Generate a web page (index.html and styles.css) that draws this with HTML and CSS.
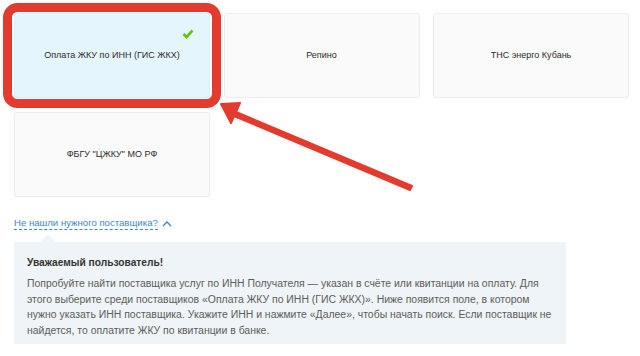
FILE: index.html
```html
<!DOCTYPE html>
<html lang="ru">
<head>
<meta charset="utf-8">
<link rel="stylesheet" href="styles.css">
</head>
<body>
<div class="page">
  <div class="grid">
    <div class="card selected">
      <span>Оплата ЖКУ по ИНН (ГИС ЖКХ)</span>
      <svg class="check" width="12" height="10" viewBox="0 0 12 10"><path d="M1.5 5 L4.5 8 L10.5 1.5" fill="none" stroke="#66c20a" stroke-width="2.6"/></svg>
    </div>
    <div class="card"><span>Репино</span></div>
    <div class="card"><span>ТНС энерго Кубань</span></div>
    <div class="card"><span>ФБГУ "ЦЖКУ" МО РФ</span></div>
  </div>
  <div class="toggle">
    <span class="link">Не нашли нужного поставщика?</span>
    <svg class="chev" width="10" height="7" viewBox="0 0 10 7"><path d="M1 6 L5 2 L9 6" fill="none" stroke="#3d86c6" stroke-width="1.3"/></svg>
  </div>
  <div class="info">
    <div class="info-title">Уважаемый пользователь!</div>
    <p class="info-text">Попробуйте найти поставщика услуг по ИНН Получателя — указан в счёте или квитанции на оплату. Для этого выберите среди поставщиков «Оплата ЖКУ по ИНН (ГИС ЖКХ)». Ниже появится поле, в котором нужно указать ИНН поставщика. Укажите ИНН и нажмите «Далее», чтобы начать поиск. Если поставщик не найдется, то оплатите ЖКУ по квитанции в банке.</p>
  </div>
</div>
<svg class="annot" width="640" height="356" viewBox="0 0 640 356">
  <rect x="7.5" y="7.5" width="209" height="96" rx="10" ry="10" fill="none" stroke="#e33b2e" stroke-width="9"/>
  <path d="M412 186 L236 112 L240 103 L221 104 L231 123 L234 116 L410 190 Z" fill="#e33b2e" stroke="#e33b2e" stroke-width="2" stroke-linejoin="round"/>
</svg>
</body>
</html>
```
FILE: styles.css
```css
html, body {
  margin: 0;
  padding: 0;
  background: #fff;
}
body {
  font-family: "Liberation Sans", Arial, sans-serif;
  color: #333;
  width: 640px;
  height: 356px;
  overflow: hidden;
  position: relative;
}
.page {
  padding: 13px 11px 0 14px;
}
.grid {
  display: grid;
  grid-template-columns: 196px 196px 196px;
  column-gap: 13.5px;
  row-gap: 14px;
}
.card {
  position: relative;
  height: 85px;
  box-sizing: border-box;
  background: #fafafa;
  border: 1px solid #ececec;
  border-radius: 3px;
  display: flex;
  align-items: center;
  justify-content: center;
  font-size: 9px;
  color: #2b2b2b;
  padding-bottom: 2px;
}
.card.selected {
  background: #e5f5fd;
  border-color: #d9eef8;
}
.check {
  position: absolute;
  top: 15px;
  right: 15px;
}
.toggle {
  margin-top: 19px;
  display: flex;
  align-items: center;
  gap: 4px;
  height: 14px;
}
.link {
  font-size: 9.6px;
  color: #3d86c6;
  border-bottom: 1px dashed #3d86c6;
  line-height: 12px;
}
.chev {
  margin-top: 1px;
}
.info {
  position: relative;
  margin-top: 12px;
  width: 552px;
  box-sizing: border-box;
  background: #eef4f7;
  padding: 14px 14px 12px 13px;
  height: 102px;
}
.info::before {
  content: "";
  position: absolute;
  top: -8px;
  left: 26px;
  border-left: 8px solid transparent;
  border-right: 8px solid transparent;
  border-bottom: 8px solid #eef4f7;
}
.info-title {
  font-size: 10.2px;
  font-weight: bold;
  color: #333;
  line-height: 13px;
}
.info-text {
  margin: 7px 0 0;
  font-size: 10.45px;
  line-height: 15.7px;
  color: #5c5c5c;
}
.annot {
  position: absolute;
  left: 0;
  top: 0;
  pointer-events: none;
}
```
